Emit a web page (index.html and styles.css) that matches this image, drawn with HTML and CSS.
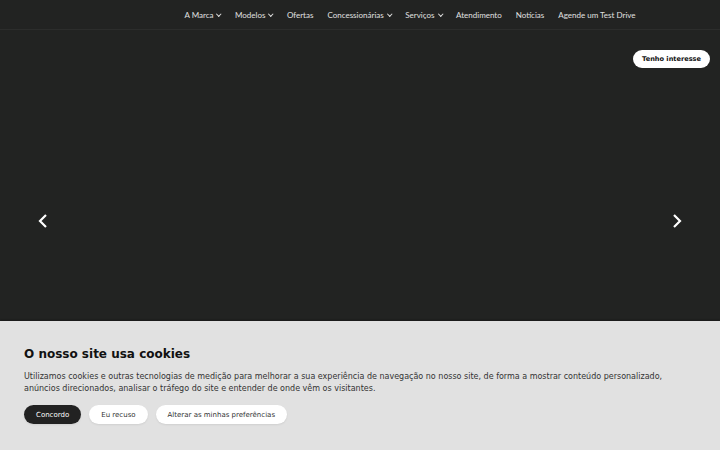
FILE: index.html
```html
<!DOCTYPE html>
<html lang="pt">
<head>
  <meta charset="UTF-8" />
  <meta name="viewport" content="width=device-width, initial-scale=1.0"/>
  <title>Início</title>
  <link rel="stylesheet" href="styles.css">
</head>
<body>

  <header class="site-header">
    <nav class="main-nav">
      <a href="#" class="nav-item">A Marca <span class="caret"></span></a>
      <a href="#" class="nav-item">Modelos <span class="caret"></span></a>
      <a href="#" class="nav-item">Ofertas</a>
      <a href="#" class="nav-item">Concessionárias <span class="caret"></span></a>
      <a href="#" class="nav-item">Serviços <span class="caret"></span></a>
      <a href="#" class="nav-item">Atendimento</a>
      <a href="#" class="nav-item">Notícias</a>
      <a href="#" class="nav-item">Agende um Test Drive</a>
    </nav>
  </header>

  <section class="hero">
    <div class="hero-top">
      <a href="#" class="btn-interest">Tenho interesse</a>
    </div>
    <div class="hero-controls">
      <button class="slide-arrow" aria-label="Anterior">
        <svg width="12" height="16" viewBox="0 0 12 16"><path d="M9 2 L3 8 L9 14" fill="none" stroke="#fff" stroke-width="2.2"/></svg>
      </button>
      <button class="slide-arrow" aria-label="Próximo">
        <svg width="12" height="16" viewBox="0 0 12 16"><path d="M3 2 L9 8 L3 14" fill="none" stroke="#fff" stroke-width="2.2"/></svg>
      </button>
    </div>
  </section>

  <div class="cookie-banner">
    <h2>O nosso site usa cookies</h2>
    <p>Utilizamos cookies e outras tecnologias de medição para melhorar a sua experiência de navegação no nosso site, de forma a mostrar conteúdo personalizado, anúncios direcionados, analisar o tráfego do site e entender de onde vêm os visitantes.</p>
    <div class="cookie-actions">
      <button class="cookie-btn dark">Concordo</button>
      <button class="cookie-btn">Eu recuso</button>
      <button class="cookie-btn">Alterar as minhas preferências</button>
    </div>
  </div>

</body>
</html>
```

FILE: styles.css
```css
* {
  margin: 0;
  padding: 0;
  box-sizing: border-box;
}

body {
  font-family: 'Lato', 'Open Sans', sans-serif;
  background: #222322;
  color: #fff;
  overflow: hidden;
  height: 450px;
}

.site-header {
  height: 30px;
  border-bottom: 1px solid #2c2d2c;
  display: flex;
  align-items: center;
  justify-content: center;
  padding-left: 100px;
}

.main-nav {
  display: flex;
  gap: 14px;
  align-items: center;
}

.nav-item {
  color: #e0e0e0;
  text-decoration: none;
  font-size: 8px;
  display: flex;
  align-items: center;
  gap: 4px;
}

.caret {
  width: 3.5px;
  height: 3.5px;
  border-right: 1px solid #e0e0e0;
  border-bottom: 1px solid #e0e0e0;
  transform: rotate(45deg);
  margin-top: -2px;
}

.hero {
  height: 291px;
  display: flex;
  flex-direction: column;
}

.hero-top {
  display: flex;
  justify-content: flex-end;
  padding: 20px 10px 0 0;
}

.btn-interest {
  background: #fff;
  color: #111;
  font-family: 'DejaVu Sans', sans-serif;
  font-weight: bold;
  font-size: 6.6px;
  text-decoration: none;
  padding: 4px 9px;
  height: 18px;
  line-height: 10px;
  border-radius: 9px;
}

.hero-controls {
  display: flex;
  justify-content: space-between;
  padding: 0 37px;
  margin-top: 145px;
}

.slide-arrow {
  background: none;
  border: none;
  width: 12px;
  height: 16px;
  cursor: pointer;
}

.cookie-banner {
  background: #e1e1e1;
  color: #222;
  font-family: 'DejaVu Sans', sans-serif;
  padding: 26px 24px 30px;
  height: 129px;
  box-shadow: 0 -1px 2px rgba(0, 0, 0, 0.3);
}

.cookie-banner h2 {
  font-size: 12px;
  font-weight: bold;
  color: #111;
  margin-bottom: 10px;
}

.cookie-banner p {
  font-size: 8px;
  line-height: 12px;
  color: #333;
  margin-bottom: 10px;
}

.cookie-actions {
  display: flex;
  gap: 8px;
}

.cookie-btn {
  font-family: 'DejaVu Sans', sans-serif;
  font-size: 7px;
  height: 19px;
  padding: 0 12px;
  border-radius: 10px;
  border: none;
  background: #fff;
  color: #333;
  box-shadow: 0 1px 2px rgba(0, 0, 0, 0.08);
}

.cookie-btn.dark {
  background: #222;
  color: #fff;
}
```
